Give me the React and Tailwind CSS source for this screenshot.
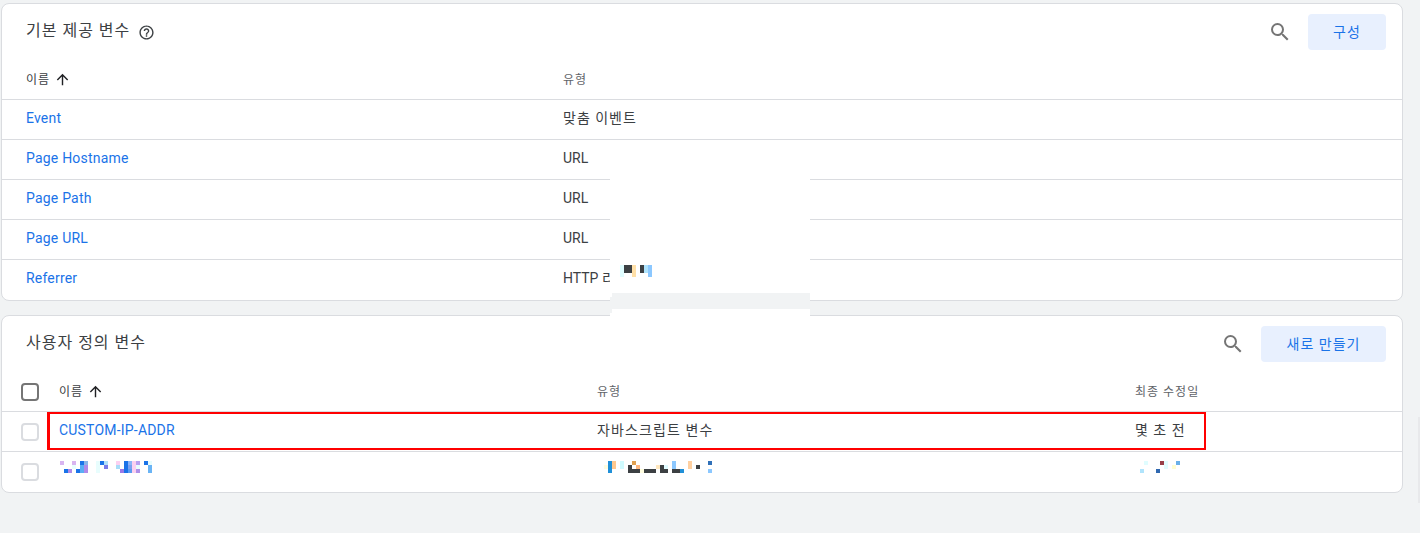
const font = "font-['Roboto','Noto_Sans_CJK_KR',sans-serif]"

const mosaicName = [
  [60, 461, "#d8b4f0"], [72, 461, "#d8b4f0"], [80, 461, "#1a73e8"], [84, 461, "#8ab4e8"], [96, 461, "#e8fdfd"], [100, 461, "#1a73e8"], [104, 461, "#b3e0f8"],
  [116, 461, "#fbd0f0"], [124, 461, "#1a73e8"], [128, 461, "#8ab4f8"], [132, 461, "#fbd0f0"], [136, 461, "#b9a0f0"], [144, 461, "#1a73e8"], [148, 461, "#e8fdfd"],
  [72, 465, "#e8fdfd"], [80, 465, "#59aef5"], [84, 465, "#b08ae8"], [96, 465, "#e8fdfd"], [104, 465, "#7a7ae8"], [116, 465, "#a8dcf8"], [124, 465, "#1a73e8"],
  [128, 465, "#7aa0f0"], [132, 465, "#fbd0f0"], [136, 465, "#e8fdfd"], [148, 465, "#6ab4f5"],
  [64, 469, "#1a73e8"], [68, 469, "#b08ae8"], [76, 469, "#1a73e8"], [80, 469, "#59aef5"], [84, 469, "#b08ae8"], [96, 469, "#e8fdfd"], [120, 469, "#9a7ae8"],
  [124, 469, "#1a73e8"], [128, 469, "#5a9cf0"], [132, 469, "#fbd0f0"], [136, 469, "#b090e8"], [148, 469, "#6ab4f5"],
]

const mosaicType = [
  [608, 461, "#2090d8"], [612, 461, "#ffc890"], [620, 461, "#d0fbff"], [632, 461, "#e0a050"], [672, 461, "#8cc8ff"], [688, 461, "#ffd0a0"], [708, 461, "#3070b8"],
  [604, 465, "#fffde0"], [608, 465, "#2090d8"], [612, 465, "#ffc890"], [620, 465, "#d0fbff"], [628, 465, "#3c4043"], [636, 465, "#ffb880"], [656, 465, "#ffe8c0"],
  [660, 465, "#3c4043"], [664, 465, "#e0fbff"], [672, 465, "#8cc8ff"], [688, 465, "#ffd0a0"], [696, 465, "#3c4043"],
  [608, 469, "#2090d8"], [628, 469, "#3c4043"], [632, 469, "#3c4043"], [636, 469, "#3c4043"], [640, 469, "#fffde0"], [644, 469, "#3c4043"], [648, 469, "#3c4043"],
  [652, 469, "#3c4043"], [660, 469, "#3c4043"], [664, 469, "#3c4043"], [672, 469, "#3c4043"], [676, 469, "#3c4043"], [680, 469, "#2090d8"], [708, 469, "#8cc8ff"],
]

const mosaicDate = [
  [1144, 461, "#e0fdff"], [1160, 461, "#984048"], [1164, 461, "#e0fdff"], [1176, 461, "#6ab0e8"],
  [1164, 465, "#e0fdff"], [1172, 465, "#fffdd0"],
  [1140, 469, "#b0e4fc"], [1156, 469, "#3068b0"],
]

const mosaicHttp = [
  [620, 265, "#e0fdff"], [620, 269, "#e0fdff"], [620, 273, "#e0fdff"],
  [624, 265, "#3c4043"], [628, 265, "#3c4043"], [624, 269, "#3c4043"], [628, 269, "#3c4043"],
  [632, 265, "#ffe0a8"], [632, 269, "#ffe0a8"], [632, 273, "#ffe0a8"],
  [640, 265, "#3c4043"], [640, 269, "#3c4043"],
  [644, 265, "#b0e4fc"], [644, 269, "#b0e4fc"],
  [648, 265, "#8cc8ff"], [648, 269, "#8cc8ff"], [648, 273, "#8cc8ff"],
]

// pixelated blur blocks, coordinates are relative to x0/y0
function Mosaic({ cells, x0, y0, w, h, className }) {
  return (
    <svg width={w} height={h} viewBox={`${x0} ${y0} ${w} ${h}`} shapeRendering="crispEdges" className={className}>
      {cells.map(([x, y, c]) => (
        <rect key={`${x}-${y}`} x={x} y={y} width="4" height="4" fill={c} />
      ))}
    </svg>
  )
}

function SearchIcon() {
  return (
    <svg width="24" height="24" viewBox="0 0 24 24" fill="#757575">
      <path d="M15.5 14h-.79l-.28-.27A6.471 6.471 0 0 0 16 9.5 6.5 6.5 0 1 0 9.5 16c1.61 0 3.09-.59 4.23-1.57l.27.28v.79l5 4.99L20.49 19l-4.99-5zm-6 0C7.01 14 5 11.99 5 9.5S7.01 5 9.5 5 14 7.01 14 9.5 11.99 14 9.5 14z" />
    </svg>
  )
}

function HelpIcon() {
  return (
    <svg width="17" height="17" viewBox="0 0 24 24" fill="#3c4043">
      <path d="M11 18h2v-2h-2v2zm1-16C6.48 2 2 6.48 2 12s4.48 10 10 10 10-4.48 10-10S17.52 2 12 2zm0 18c-4.41 0-8-3.59-8-8s3.59-8 8-8 8 3.59 8 8-3.59 8-8 8zm0-14c-2.21 0-4 1.79-4 4h2c0-1.1.9-2 2-2s2 .9 2 2c0 2-3 1.75-3 5h2c0-2.25 3-2.5 3-5 0-2.21-1.79-4-4-4z" />
    </svg>
  )
}

function ArrowUp() {
  return (
    <svg width="17" height="17" viewBox="0 0 24 24" fill="#202124">
      <path d="M4 12l1.41 1.41L11 7.83V20h2V7.83l5.58 5.59L20 12l-8-8-8 8z" />
    </svg>
  )
}

function Header({ title, help, button, btnWidth }) {
  return (
    <div className="h-14 flex items-center pl-6 pr-4">
      <h2 className="text-base leading-6 tracking-[1px] text-[#3c4043] font-normal -mt-[2px]">{title}</h2>
      {help && <span className="ml-2"><HelpIcon /></span>}
      <div className="ml-auto flex items-center gap-4">
        <SearchIcon />
        <button className={`${btnWidth} h-9 rounded bg-[#e8f0fe] text-sm tracking-[1px] text-[#1a73e8]`}>{button}</button>
      </div>
    </div>
  )
}

function NameHead() {
  return (
    <div className="flex items-center gap-1 text-xs tracking-[1px] text-[#3c4043]">
      이름 <ArrowUp />
    </div>
  )
}

const builtIn = [
  ["Event", "맞춤 이벤트", "tracking-[1px]"],
  ["Page Hostname", "URL", ""],
  ["Page Path", "URL", ""],
  ["Page URL", "URL", ""],
  ["Referrer", "HTTP 리퍼러", ""],
]

function Checkbox({ head }) {
  return head
    ? <div className="w-[18px] h-[18px] rounded-sm border-2 border-[#757575]" />
    : <div className="w-[18px] h-[18px] rounded-sm border-2 border-[#dadce0]" />
}

export default function App() {
  return (
    <div className={`${font} relative min-h-screen overflow-hidden bg-[#f1f3f4] pt-[3px] pl-px pr-[17px]`}>
      <div className="bg-white border border-[#dadce0] rounded-lg">
        <Header title="기본 제공 변수" help button="구성" btnWidth="w-[78px]" />
        <div className="h-10 flex items-center border-b border-[#dadce0]">
          <div className="w-[561px] pl-6"><NameHead /></div>
          <div className="text-xs tracking-[1px] text-[#5f6368]">유형</div>
        </div>
        {builtIn.map(([name, type, track], i) => (
          <div key={name} className={`h-10 flex items-center text-sm ${i < 4 ? "border-b border-[#dadce0]" : ""}`}>
            <div className="w-[561px] pl-6 -mt-1 tracking-[0.2px] text-[#1a73e8]">{name}</div>
            <div className={`-mt-1 text-[#3c4043] ${track}`}>{type}</div>
          </div>
        ))}
      </div>

      <div className="mt-[14px] bg-white border border-[#dadce0] rounded-lg">
        <Header title="사용자 정의 변수" button="새로 만들기" btnWidth="w-[125px]" />
        <div className="h-10 grid grid-cols-[57px_538px_538px_1fr] items-center border-b border-[#dadce0]">
          <div className="pl-[19px]"><Checkbox head /></div>
          <NameHead />
          <div className="text-xs tracking-[1px] text-[#5f6368]">유형</div>
          <div className="text-xs tracking-[1px] text-[#5f6368]">최종 수정일</div>
        </div>
        <div className="relative h-10 grid grid-cols-[57px_538px_538px_1fr] items-center border-b border-[#dadce0] text-sm">
          <div className="pl-[19px]"><Checkbox /></div>
          <div className="-mt-1 tracking-[0.2px] text-[#1a73e8]">CUSTOM-IP-ADDR</div>
          <div className="-mt-1 tracking-[1.1px] text-[#3c4043]">자바스크립트 변수</div>
          <div className="-mt-1 tracking-[1px] text-[#3c4043]">몇 초 전</div>
          <div className="absolute left-[45px] top-0 w-[1159px] h-[38px] border-2 border-l-[3px] border-[#ff0000]" />
        </div>
        <div className="h-10 grid grid-cols-[57px_538px_538px_1fr] items-center text-sm">
          <div className="pl-[19px]"><Checkbox /></div>
          <Mosaic cells={mosaicName} x0={59} y0={461} w={94} h={12} className="-mt-[10px]" />
          <Mosaic cells={mosaicType} x0={597} y0={461} w={116} h={12} className="-mt-[10px]" />
          <Mosaic cells={mosaicDate} x0={1135} y0={461} w={46} h={12} className="-mt-[10px]" />
        </div>
      </div>

      {/* redaction patches painted over the screenshot */}
      <div className="absolute left-[610px] top-[140px] w-[200px] h-[153px] bg-white">
        <Mosaic cells={mosaicHttp} x0={610} y0={140} w={200} h={153} />
      </div>
      <div className="absolute left-[612px] top-[293px] w-[198px] h-4 bg-[#f1f3f4]" />
      <div className="absolute left-[610px] top-[293px] w-[2px] h-1 bg-white" />
      <div className="absolute left-[610px] top-[309px] w-[200px] h-2 bg-white" />
      <div className="absolute left-[610px] top-[297px] w-[2px] h-4 bg-[#f1f3f4]" />

      {/* edge of a panel cut off on the right */}
      <div className="absolute right-0 top-[417px] w-[2px] h-[86px] bg-[#e8e9eb]" />
    </div>
  )
}
